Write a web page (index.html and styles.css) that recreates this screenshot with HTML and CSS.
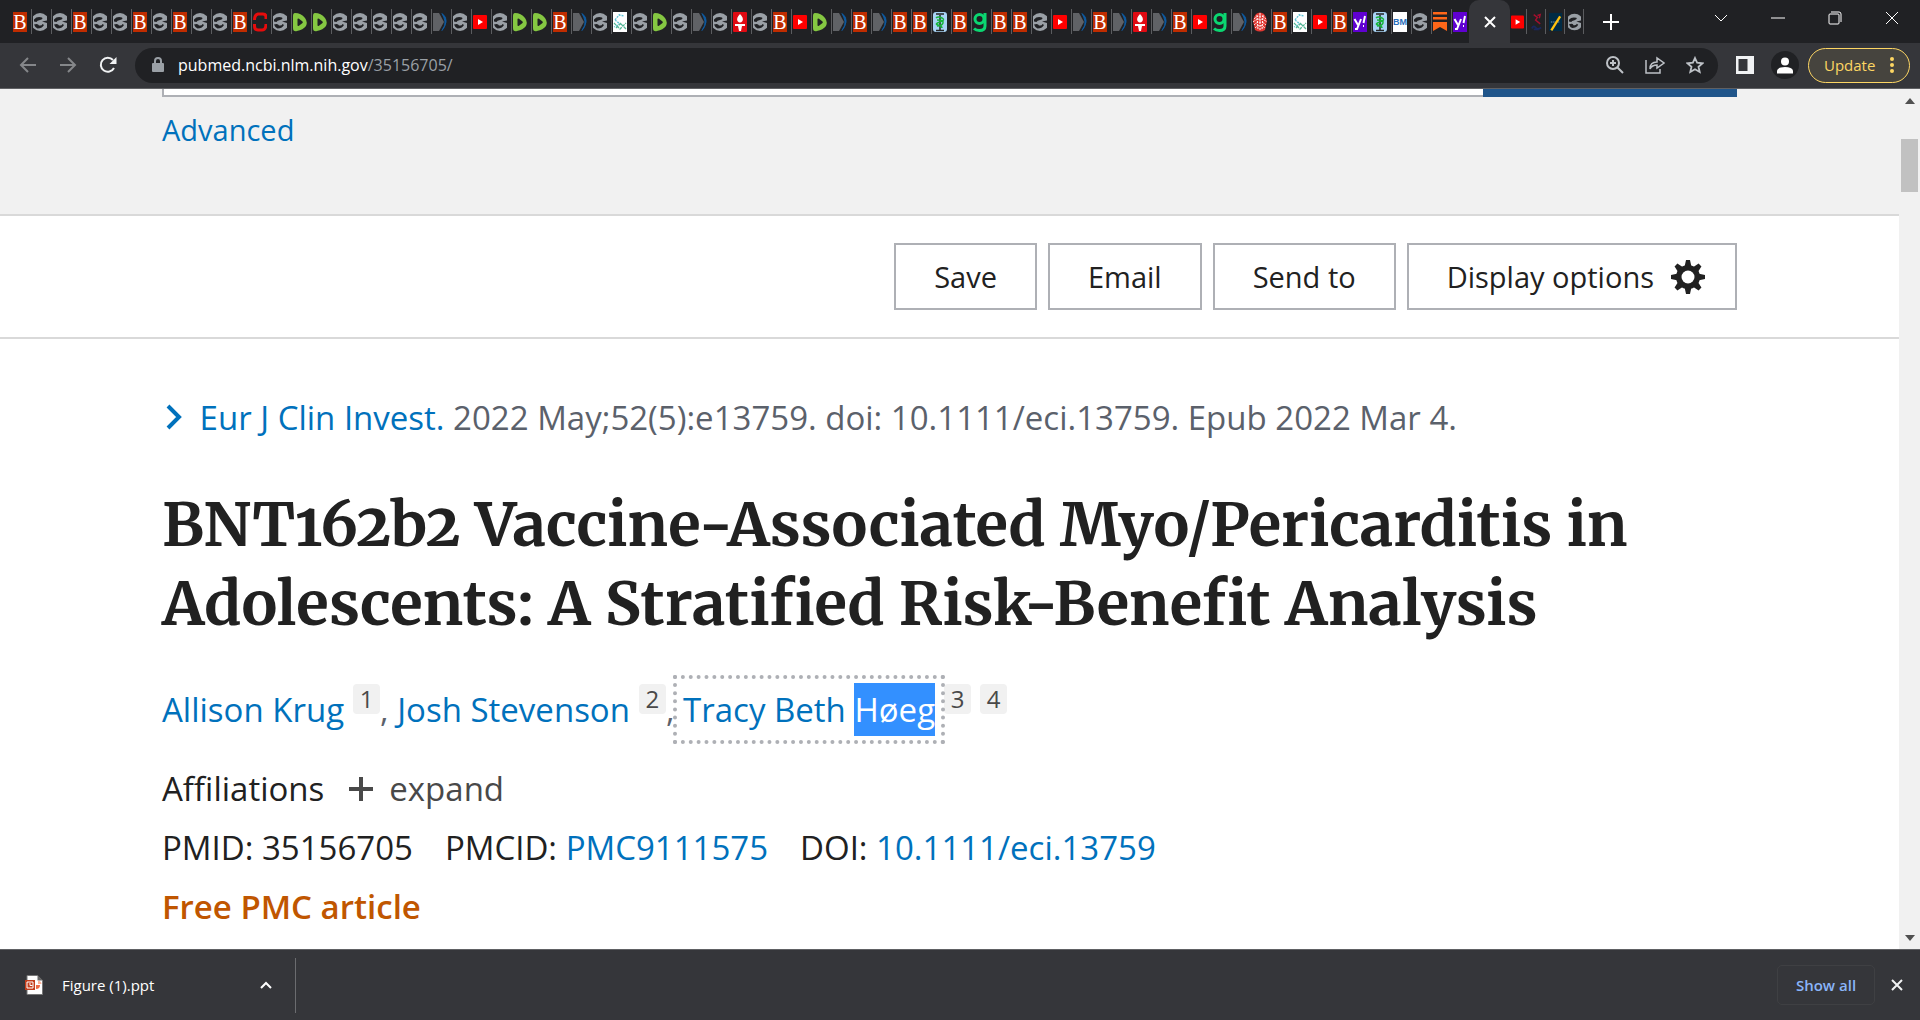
FILE: index.html
```html
<!DOCTYPE html>
<html lang="en">
<head>
    <meta charset="UTF-8">
    <meta name="viewport" content="width=device-width, initial-scale=1.0">
    <title>BNT162b2 Vaccine-Associated Myo/Pericarditis in Adolescents</title>
    <link rel="stylesheet" href="styles.css">
</head>
<body>
    <!-- Favicons shared by the tabs -->
    <svg class="sprite" aria-hidden="true">
        <symbol id="icon-globe" viewBox="0 0 14 20">
            <circle cx="7" cy="10" r="9" fill="#9aa0a6"/>
            <path d="M1 7.500Q4 4 9 5.500Q10.500 7 7 8Q4 8.500 3.500 10L1 9.500ZM1 12.500Q5 11 6 13.500Q9 14 9.500 12L11 13Q9 16.500 4.500 16.500Q2 15.500 1 12.500ZM14 8.500L9 9.500L14 11Z" fill="#202124"/>
        </symbol>
        <symbol id="icon-rumble" viewBox="0 0 14 20">
            <path d="M2 1Q0 1 0 4V16Q0 20 4 19Q10 18 13 14Q15 10 12 6Q8 1 2 1Z" fill="#85c742"/>
            <path d="M4.500 7.500Q4.500 6 6 6.800L9.500 9.500Q10.200 10.300 9.500 11L6 13.700Q4.500 14.400 4.500 13Z" fill="#202124"/>
        </symbol>
        <symbol id="icon-cnet" viewBox="0 0 14 20">
            <path d="M13 7V5Q13 2 10 2H5Q1.500 3 1.500 8M1.500 12V14Q1.500 18 5 18H9Q13 18 13 12" fill="none" stroke="#e60c0c" stroke-width="3"/>
        </symbol>
        <symbol id="icon-ncbi" viewBox="0 0 14 20">
            <path d="M0 1H6L11 10L6 19H0Z" fill="#606266"/>
            <path d="M9 1.500Q14 5 13 10T9 18.500Q13 13 12 9T9 1.500Z" fill="#0d5aa0" stroke="#0d5aa0"/>
        </symbol>
        <symbol id="icon-youtube" viewBox="0 0 14 20">
            <rect y="3" width="14" height="14" rx="1" fill="#f00"/>
            <path d="M5 7L10 10L5 13Z" fill="#fff"/>
        </symbol>
        <symbol id="icon-net" viewBox="0 0 14 20">
            <rect width="14" height="20" fill="#fff"/>
            <path d="M2 8L6 3L11 4L6 3M2 8L7 12L1 15" fill="none" stroke="#5ec5d8" stroke-width="1.300" stroke-dasharray="2 1"/>
            <path d="M1 11L7 17L13 11M8 12L13 17M3 16L8 11" fill="none" stroke="#55b795" stroke-width="1.300" stroke-dasharray="3 1"/>
        </symbol>
        <symbol id="icon-torch" viewBox="0 0 14 20">
            <rect width="14" height="20" rx="1" fill="#e00b13"/>
            <path d="M7 2Q3 6 4.500 9Q7 12 9.500 9Q11 6 7 2ZM2 12H12V14H9L8 19H6L5 14H2Z" fill="#fff"/>
        </symbol>
        <symbol id="icon-staff" viewBox="0 0 14 20">
            <rect width="14" height="20" rx="3" fill="#a8d3f5"/>
            <path d="M3 2H11M3 18.500H11M7 3V18" stroke="#252525" stroke-width="1.500"/>
            <path d="M3 6Q5 4 9 6T7 10T5 13T9 16M4 8Q11 8 10 11T4 14" fill="none" stroke="#19b53b" stroke-width="1.500"/>
        </symbol>
        <symbol id="icon-g" viewBox="0 0 14 20">
            <circle cx="6.500" cy="7" r="4.500" fill="none" stroke="#0bd671" stroke-width="3"/>
            <path d="M12 1V14Q12 18.500 6.500 18.500Q3 18.500 1 16.500" fill="none" stroke="#0bd671" stroke-width="3"/>
        </symbol>
        <symbol id="icon-print" viewBox="0 0 14 20">
            <path d="M3 2Q7-1 11 2Q13 4 14 9L12 18Q7 21 2 18L0 9Q1 4 3 2Z" fill="#e23832"/>
            <path d="M1 7Q7 1 13 7M0 10Q7 4 14 10M1 13Q7 7 13 13M2 16Q7 11 12 16M4 3L5 18M7 1V19M10 3L9 18" fill="none" stroke="#fff" stroke-dasharray="2 1"/>
        </symbol>
        <symbol id="icon-yahoo" viewBox="0 0 14 20">
            <rect width="14" height="20" fill="#6001d2"/>
            <path d="M1.500 7L5 13M8 7L4 17H2M12 4L10.500 11M10 14H11" fill="none" stroke="#fff" stroke-width="2"/>
        </symbol>
        <symbol id="icon-substack" viewBox="0 0 14 20">
            <path d="M0 0H14V2.500H0ZM0 5H14V7.500H0ZM0 10H14V19L7 15L0 19Z" fill="#ff6719"/>
        </symbol>
        <symbol id="icon-map" viewBox="0 0 14 20">
            <path d="M4 2L8 5L6 8L11 12M8 3L11 2L10 6" fill="none" stroke="#a30f2e" stroke-width="1.500"/>
            <path d="M2 17Q4 13 6 16T12 16M4 18H10" fill="none" stroke="#19275c" stroke-width="2"/>
        </symbol>
        <symbol id="icon-slash" viewBox="0 0 14 20">
            <rect width="14" height="20" fill="#002b45"/>
            <path d="M2 10H12" stroke="#44708a" stroke-width="2" stroke-dasharray="1 1"/>
            <path d="M2.500 19L12 4" stroke="#ffc20e" stroke-width="2.500"/>
        </symbol>
    </svg>

    <header class="browser">
        <div class="tab-strip">
            <nav id="tabs" class="tabs" aria-label="Tabs"></nav>
            <button class="tab-active" aria-label="Close tab">
                <svg width="12" height="12" viewBox="0 0 12 12"><path d="M1 1L11 11M11 1L1 11" stroke="#fff" stroke-width="2"/></svg>
            </button>
            <nav id="tabs-after" class="tabs narrow" aria-label="More tabs"></nav>
            <button class="new-tab" aria-label="New tab">
                <svg width="16" height="16" viewBox="0 0 16 16"><path d="M8 0V16M0 8H16" stroke="#fff" stroke-width="2"/></svg>
            </button>
            <div class="window-controls">
                <button aria-label="Search tabs"><svg width="14" height="14" viewBox="0 0 14 14"><path d="M1 4L7 10L13 4"/></svg></button>
                <button aria-label="Minimize"><svg width="14" height="14" viewBox="0 0 14 14"><path d="M0 7H14"/></svg></button>
                <button aria-label="Restore"><svg width="14" height="14" viewBox="0 0 14 14"><rect x="1" y="3" width="10" height="10" rx="1"/><path d="M3 1H11Q13 1 13 3V11"/></svg></button>
                <button aria-label="Close"><svg width="14" height="14" viewBox="0 0 14 14"><path d="M1 1L13 13M13 1L1 13"/></svg></button>
            </div>
        </div>
        <div class="toolbar">
            <button class="nav-button" aria-label="Back">
                <svg width="18" height="18" viewBox="0 0 18 18"><path d="M17 9H2M9 2L2 9L9 16" fill="none" stroke="#85878a" stroke-width="2"/></svg>
            </button>
            <button class="nav-button" aria-label="Forward">
                <svg width="18" height="18" viewBox="0 0 18 18"><path d="M1 9H16M9 2L16 9L9 16" fill="none" stroke="#85878a" stroke-width="2"/></svg>
            </button>
            <button class="nav-button" aria-label="Reload">
                <svg width="18" height="18" viewBox="0 0 18 18"><path d="M15 12A7 7 0 1 1 14 4" fill="none" stroke="#f1f3f4" stroke-width="2"/><path d="M17.500 1V8H10.500Z" fill="#f1f3f4"/></svg>
            </button>
            <div class="omnibox">
                <svg width="12" height="16" viewBox="0 0 12 16"><rect y="6" width="12" height="9" rx="1" fill="#9aa0a6"/><path d="M3 7V4A3 3 0 0 1 9 4V7" fill="none" stroke="#9aa0a6" stroke-width="2"/></svg>
                <div class="url" role="textbox" aria-label="Address" contenteditable="true" spellcheck="false"><span class="host">pubmed.ncbi.nlm.nih.gov</span>/35156705/</div>
                <button aria-label="Zoom"><svg width="18" height="18" viewBox="0 0 18 18"><circle cx="7" cy="7" r="6"/><path d="M11 11L17 17M4 7H10M7 4V10"/></svg></button>
                <button aria-label="Share"><svg width="20" height="18" viewBox="0 0 20 18"><path d="M1 4V17H15V13M5 13Q5 6 12 6V2L19 7L12 12V9Q7 9 5 13Z" stroke-width="1.500"/></svg></button>
                <button aria-label="Bookmark"><svg width="18" height="18" viewBox="0 0 18 18"><path d="M9 2L11.100 6.700L16.500 7.300L12.500 10.800L13.700 16L9 13.300L4.300 16L5.500 10.800L1.500 7.300L6.900 6.700Z" stroke-width="1.800"/></svg></button>
            </div>
            <button class="panel-button" aria-label="Side panel">
                <svg width="18" height="18" viewBox="0 0 18 18"><path d="M0 0H18V18H0ZM2.500 3V15H11.500V3Z" fill="#f1f3f4" fill-rule="evenodd"/></svg>
            </button>
            <button class="avatar" aria-label="Profile">
                <svg width="16" height="17" viewBox="0 0 16 17"><circle cx="8" cy="4.500" r="4" fill="#fff"/><path d="M0 16.500V13.500Q1 10 8 10T16 13.500V16.500Z" fill="#fff"/></svg>
            </button>
            <button class="update">Update
                <svg width="4" height="18" viewBox="0 0 4 18"><circle cx="2" cy="3" r="2"/><circle cx="2" cy="9" r="2"/><circle cx="2" cy="15" r="2"/></svg>
            </button>
        </div>
    </header>

    <div class="viewport">
        <main class="page">
            <section class="search">
                <form class="search-form">
                    <input type="text" aria-label="Search term">
                    <button type="button" aria-label="Search"></button>
                </form>
                <a href="#">Advanced</a>
            </section>

            <section class="actions">
                <button>Save</button>
                <button>Email</button>
                <button>Send to</button>
                <button class="display-options">Display options
                    <svg width="36" height="36" viewBox="0 0 36 36">
                        <g fill="#212121">
                            <path id="tooth" d="M14.500 8L16 1H20L21.500 8V28L20 35H16L14.500 28Z"/>
                            <use href="#tooth" transform="rotate(45 18 18)"/>
                            <use href="#tooth" transform="rotate(90 18 18)"/>
                            <use href="#tooth" transform="rotate(135 18 18)"/>
                            <circle cx="18" cy="18" r="12"/>
                        </g>
                        <circle cx="18" cy="18" r="6.500" fill="#fff"/>
                    </svg>
                </button>
            </section>

            <article class="article">
                <p class="citation">
                    <svg width="18" height="26" viewBox="0 0 18 26"><path d="M3 2L14 13L3 24" fill="none" stroke="#0071bc" stroke-width="4"/></svg>
                    <a href="#">Eur J Clin Invest.</a> 2022 May;52(5):e13759. doi: 10.1111/eci.13759. Epub 2022 Mar 4.
                </p>
                <h1>BNT162b2 Vaccine-Associated Myo/Pericarditis in Adolescents: A Stratified Risk-Benefit Analysis</h1>
                <p class="authors">
                    <a href="#">Allison Krug</a><sup>1</sup><span class="comma">,</span>
                    <a href="#">Josh Stevenson</a><sup>2</sup><span class="comma">,</span>
                    <a href="#" class="focused">Tracy Beth <mark>Høeg</mark></a><sup>3</sup><sup>4</sup>
                </p>
                <div class="affiliations">
                    <span>Affiliations</span>
                    <button>
                        <svg width="24" height="24" viewBox="0 0 24 24"><path d="M12 0V24M0 12H24" stroke="#494949" stroke-width="4"/></svg>
                        expand
                    </button>
                </div>
                <ul class="identifiers">
                    <li>PMID: 35156705</li>
                    <li>PMCID: <a href="#">PMC9111575</a></li>
                    <li>DOI: <a href="#">10.1111/eci.13759</a></li>
                </ul>
                <p class="free">Free PMC article</p>
            </article>
        </main>
        <div class="scrollbar">
            <svg width="10" height="6" viewBox="0 0 10 6"><path d="M0 6L5 0L10 6Z" fill="#505050"/></svg>
            <div class="thumb"></div>
            <svg width="10" height="6" viewBox="0 0 10 6"><path d="M0 0L5 6L10 0Z" fill="#505050"/></svg>
        </div>
    </div>

    <footer class="downloads">
        <button class="file">
            <svg width="18" height="20" viewBox="0 0 18 20">
                <path d="M2 .5H12.500L17.500 5.500V19.500H2Z" fill="#fff" stroke="#777"/>
                <path d="M12.500 0V5.500H18Z" fill="#666"/>
                <path d="M11 10H15Q15 14 11 14Z" fill="#ed6c47"/>
                <path d="M13 8V5.500Q16.500 6 16.500 9H13Z" fill="#ffb39a"/>
                <rect x="0" y="5" width="10" height="10" fill="#c43e1c"/>
                <path d="M2 7H8V13H2Z" fill="none" stroke="#fff"/>
                <path d="M5 8V10.500H7.500" fill="none" stroke="#fff"/>
            </svg>
            <span>Figure (1).ppt</span>
            <svg class="chevron" width="12" height="8" viewBox="0 0 12 8"><path d="M1 7L6 2L11 7" fill="none" stroke="#fff" stroke-width="2"/></svg>
        </button>
        <button class="show-all">Show all</button>
        <button class="close-bar" aria-label="Close downloads">
            <svg width="12" height="12" viewBox="0 0 12 12"><path d="M1 1L11 11M11 1L1 11" stroke="#f1f3f4" stroke-width="2"/></svg>
        </button>
    </footer>

    <script>
        // Tab icons, in the order they are open
        const openTabs = "b globe globe b globe globe b globe b globe globe b cnet globe rumble rumble globe globe globe globe " +
            "globe ncbi globe youtube globe rumble rumble b ncbi globe net globe rumble globe ncbi globe torch globe b youtube " +
            "rumble ncbi b ncbi b b staff b g b b globe youtube ncbi b ncbi torch ncbi b youtube " +
            "g ncbi print b net youtube b yahoo staff bm globe substack yahoo";
        const laterTabs = "youtube map slash globe";

        // Icons that are only letters
        const letterIcons = { b: "B", bm: "BM" };

        // Add one button per icon name
        function renderTabs(container, names) {
            names.split(" ").forEach(name => {
                const tab = document.createElement("button");
                tab.classList.add("tab");
                tab.setAttribute("aria-label", name);
                if (letterIcons[name]) {
                    tab.innerHTML = `<span class="letter letter-${name}">${letterIcons[name]}</span>`;
                } else {
                    tab.innerHTML = `<svg viewBox="0 0 14 20"><use href="#icon-${name}"/></svg>`;
                }
                container.appendChild(tab);
            });
        }

        renderTabs(document.getElementById("tabs"), openTabs);
        renderTabs(document.getElementById("tabs-after"), laterTabs);
    </script>
</body>
</html>
```
FILE: styles.css
```css
* {
    box-sizing: border-box;
}

body {
    margin: 0;
    height: 100vh;
    display: flex;
    flex-direction: column;
    overflow: hidden;
    font-family: "Segoe UI", "Open Sans", sans-serif;
    color: #212121;
    background-color: #fff;
}

button {
    font-family: inherit;
    color: inherit;
    border: 0;
    padding: 0;
    background: none;
    cursor: pointer;
}

a {
    color: #0071bc;
    text-decoration: none;
}

p, h1, ul {
    margin: 0;
    padding: 0;
}

svg {
    flex-shrink: 0;
}

.sprite {
    position: absolute;
    width: 0;
    height: 0;
}

/* Browser window */
.browser {
    flex-shrink: 0;
    background-color: #35363a;
    border-bottom: 1px solid #606164;
}

.tab-strip {
    display: flex;
    align-items: center;
    height: 43px;
    padding-left: 12px;
    background-color: #202124;
}

.tabs {
    display: flex;
}

.tab {
    display: flex;
    align-items: center;
    width: 20px;
    height: 25px;
    padding-left: 1px;
    border-right: 1px solid #5b5c5f;
}

.tab svg {
    width: 14px;
    height: 20px;
}

.letter {
    width: 14px;
    height: 20px;
    line-height: 20px;
    text-align: center;
    white-space: nowrap;
}

.letter-b {
    font-family: "Liberation Serif", serif;
    font-size: 20px;
    color: #fff;
    background-color: #bf2c00;
}

.letter-bm {
    font-family: "Liberation Sans", sans-serif;
    font-size: 9px;
    font-weight: 700;
    color: #2a6ebb;
    background-color: #fff;
}

.tabs:first-child .tab:last-child {
    width: 17px;
    border-right: 0;
}

.narrow .tab {
    width: 19px;
    padding-left: 3px;
}

.narrow .tab svg {
    width: 13px;
}

.tab-active {
    width: 41px;
    height: 43px;
    margin-right: -2px;
    border-radius: 10px 10px 0 0;
    background-color: #35363a;
}

.tab-active svg, .new-tab svg {
    display: block;
    margin: 0 auto;
}

.new-tab {
    width: 54px;
}

.window-controls {
    display: flex;
    margin-left: auto;
    padding-bottom: 4px;
}

.window-controls button {
    width: 57px;
}

.window-controls svg {
    fill: none;
    stroke: #fff;
}

.toolbar {
    display: flex;
    align-items: center;
    height: 45px;
    padding: 0 10px 1px 8px;
}

.nav-button {
    display: flex;
    justify-content: center;
    width: 40px;
}

.omnibox {
    display: flex;
    flex: 1;
    align-items: center;
    height: 35px;
    margin-left: 7px;
    padding: 0 3px 0 17px;
    border-radius: 18px;
    background-color: #202124;
}

.url {
    flex: 1;
    margin-left: 14px;
    font-size: 16px;
    line-height: 24px;
    color: #9aa0a6;
    outline: 0;
}

.host {
    color: #fff;
}

.omnibox button {
    display: flex;
    justify-content: center;
    width: 40px;
}

.omnibox button svg {
    fill: none;
    stroke: #bdc1c6;
    stroke-width: 2;
}

.panel-button {
    display: flex;
    margin: 0 17px 0 18px;
}

.avatar {
    display: flex;
    align-items: center;
    justify-content: center;
    width: 28px;
    height: 28px;
    border-radius: 50%;
    background-color: #202124;
}

.update {
    display: flex;
    align-items: center;
    justify-content: space-between;
    width: 102px;
    height: 35px;
    margin-left: 9px;
    padding: 0 15px;
    border: 1px solid #fdd663;
    border-radius: 18px;
    font-size: 15px;
    line-height: 20px;
    color: #fdd663;
    background-color: #46443e;
}

.update svg {
    fill: #fdd663;
}

/* Web page */
.viewport {
    display: flex;
    flex: 1;
    min-height: 0;
}

.page {
    flex: 1;
    overflow: hidden;
}

.search {
    display: flow-root;
    height: 127px;
    padding: 0 162px;
    border-bottom: 2px solid #d9d9d9;
    background-color: #f1f1f1;
}

.search-form {
    display: flex;
    height: 66px;
    margin-top: -58px;
}

.search-form input {
    flex: 1;
    border: 2px solid #aeb0b5;
    border-right: 0;
}

.search-form button {
    width: 254px;
    background-color: #20558a;
}

.search a {
    display: inline-block;
    margin-top: 12px;
    font-size: 29px;
    line-height: 42px;
}

.actions {
    display: flex;
    justify-content: flex-end;
    gap: 11px;
    padding: 27px 162px;
    border-bottom: 2px solid #d9d9d9;
}

.actions button {
    height: 67px;
    padding: 0 38px;
    border: 2px solid #aeb0b5;
    font-size: 29px;
}

.actions .display-options {
    display: flex;
    align-items: center;
    gap: 16px;
    padding-right: 29px;
}

.article {
    padding: 59px 162px 0;
    font-size: 33px;
    line-height: 40px;
}

.citation {
    color: #5b616b;
}

.citation svg {
    margin: 0 8px 0 3px;
}

.article h1 {
    margin-top: 47px;
    font-family: Merriweather, "Liberation Serif", serif;
    font-size: 60px;
    font-variant-numeric: oldstyle-nums;
    line-height: 79px;
}

.authors {
    margin-top: 41px;
    color: #5b616b;
}

.authors sup {
    display: inline-block;
    width: 27px;
    margin-left: 9px;
    border-radius: 4px;
    font-size: 24px;
    line-height: 30px;
    text-align: center;
    vertical-align: 14px;
    color: #494949;
    background-color: #f1f1f1;
}

.focused {
    padding: 2px 0;
    outline: 4px dotted #aeb0b5;
    outline-offset: 6px;
}

.focused mark {
    padding: 4px 0;
    color: #fff;
    background-color: #3390ff;
}

.affiliations {
    display: flex;
    gap: 25px;
    margin-top: 39px;
}

.affiliations button {
    display: flex;
    align-items: center;
    gap: 16px;
    font-size: 33px;
    line-height: 40px;
    color: #494949;
}

.identifiers {
    display: flex;
    gap: 32px;
    margin-top: 19px;
    list-style: none;
}

.free {
    margin-top: 19px;
    font-weight: 600;
    color: #c05600;
}

.scrollbar {
    display: flex;
    flex-direction: column;
    align-items: center;
    width: 21px;
    padding: 9px 0 8px;
    background-color: #f1f1f1;
}

.thumb {
    width: 17px;
    height: 53px;
    margin: 35px 0 auto;
    background-color: #c1c1c1;
}

/* Download bar */
.downloads {
    display: flex;
    flex-shrink: 0;
    align-items: center;
    height: 71px;
    padding-right: 17px;
    border-top: 1px solid #606164;
    color: #fff;
    background-color: #35363a;
}

.file {
    display: flex;
    align-items: center;
    width: 296px;
    height: 55px;
    padding: 0 23px 0 25px;
    border-right: 1px solid #6b6c6f;
    font-size: 15px;
}

.file span {
    margin-left: 19px;
}

.chevron {
    margin-left: auto;
}

.show-all {
    width: 98px;
    height: 40px;
    margin-left: auto;
    border: 1px solid #3f4043;
    border-radius: 5px;
    font-size: 15px;
    font-weight: 600;
    color: #8ab4f8;
}

.close-bar {
    display: flex;
    margin-left: 16px;
}
```
